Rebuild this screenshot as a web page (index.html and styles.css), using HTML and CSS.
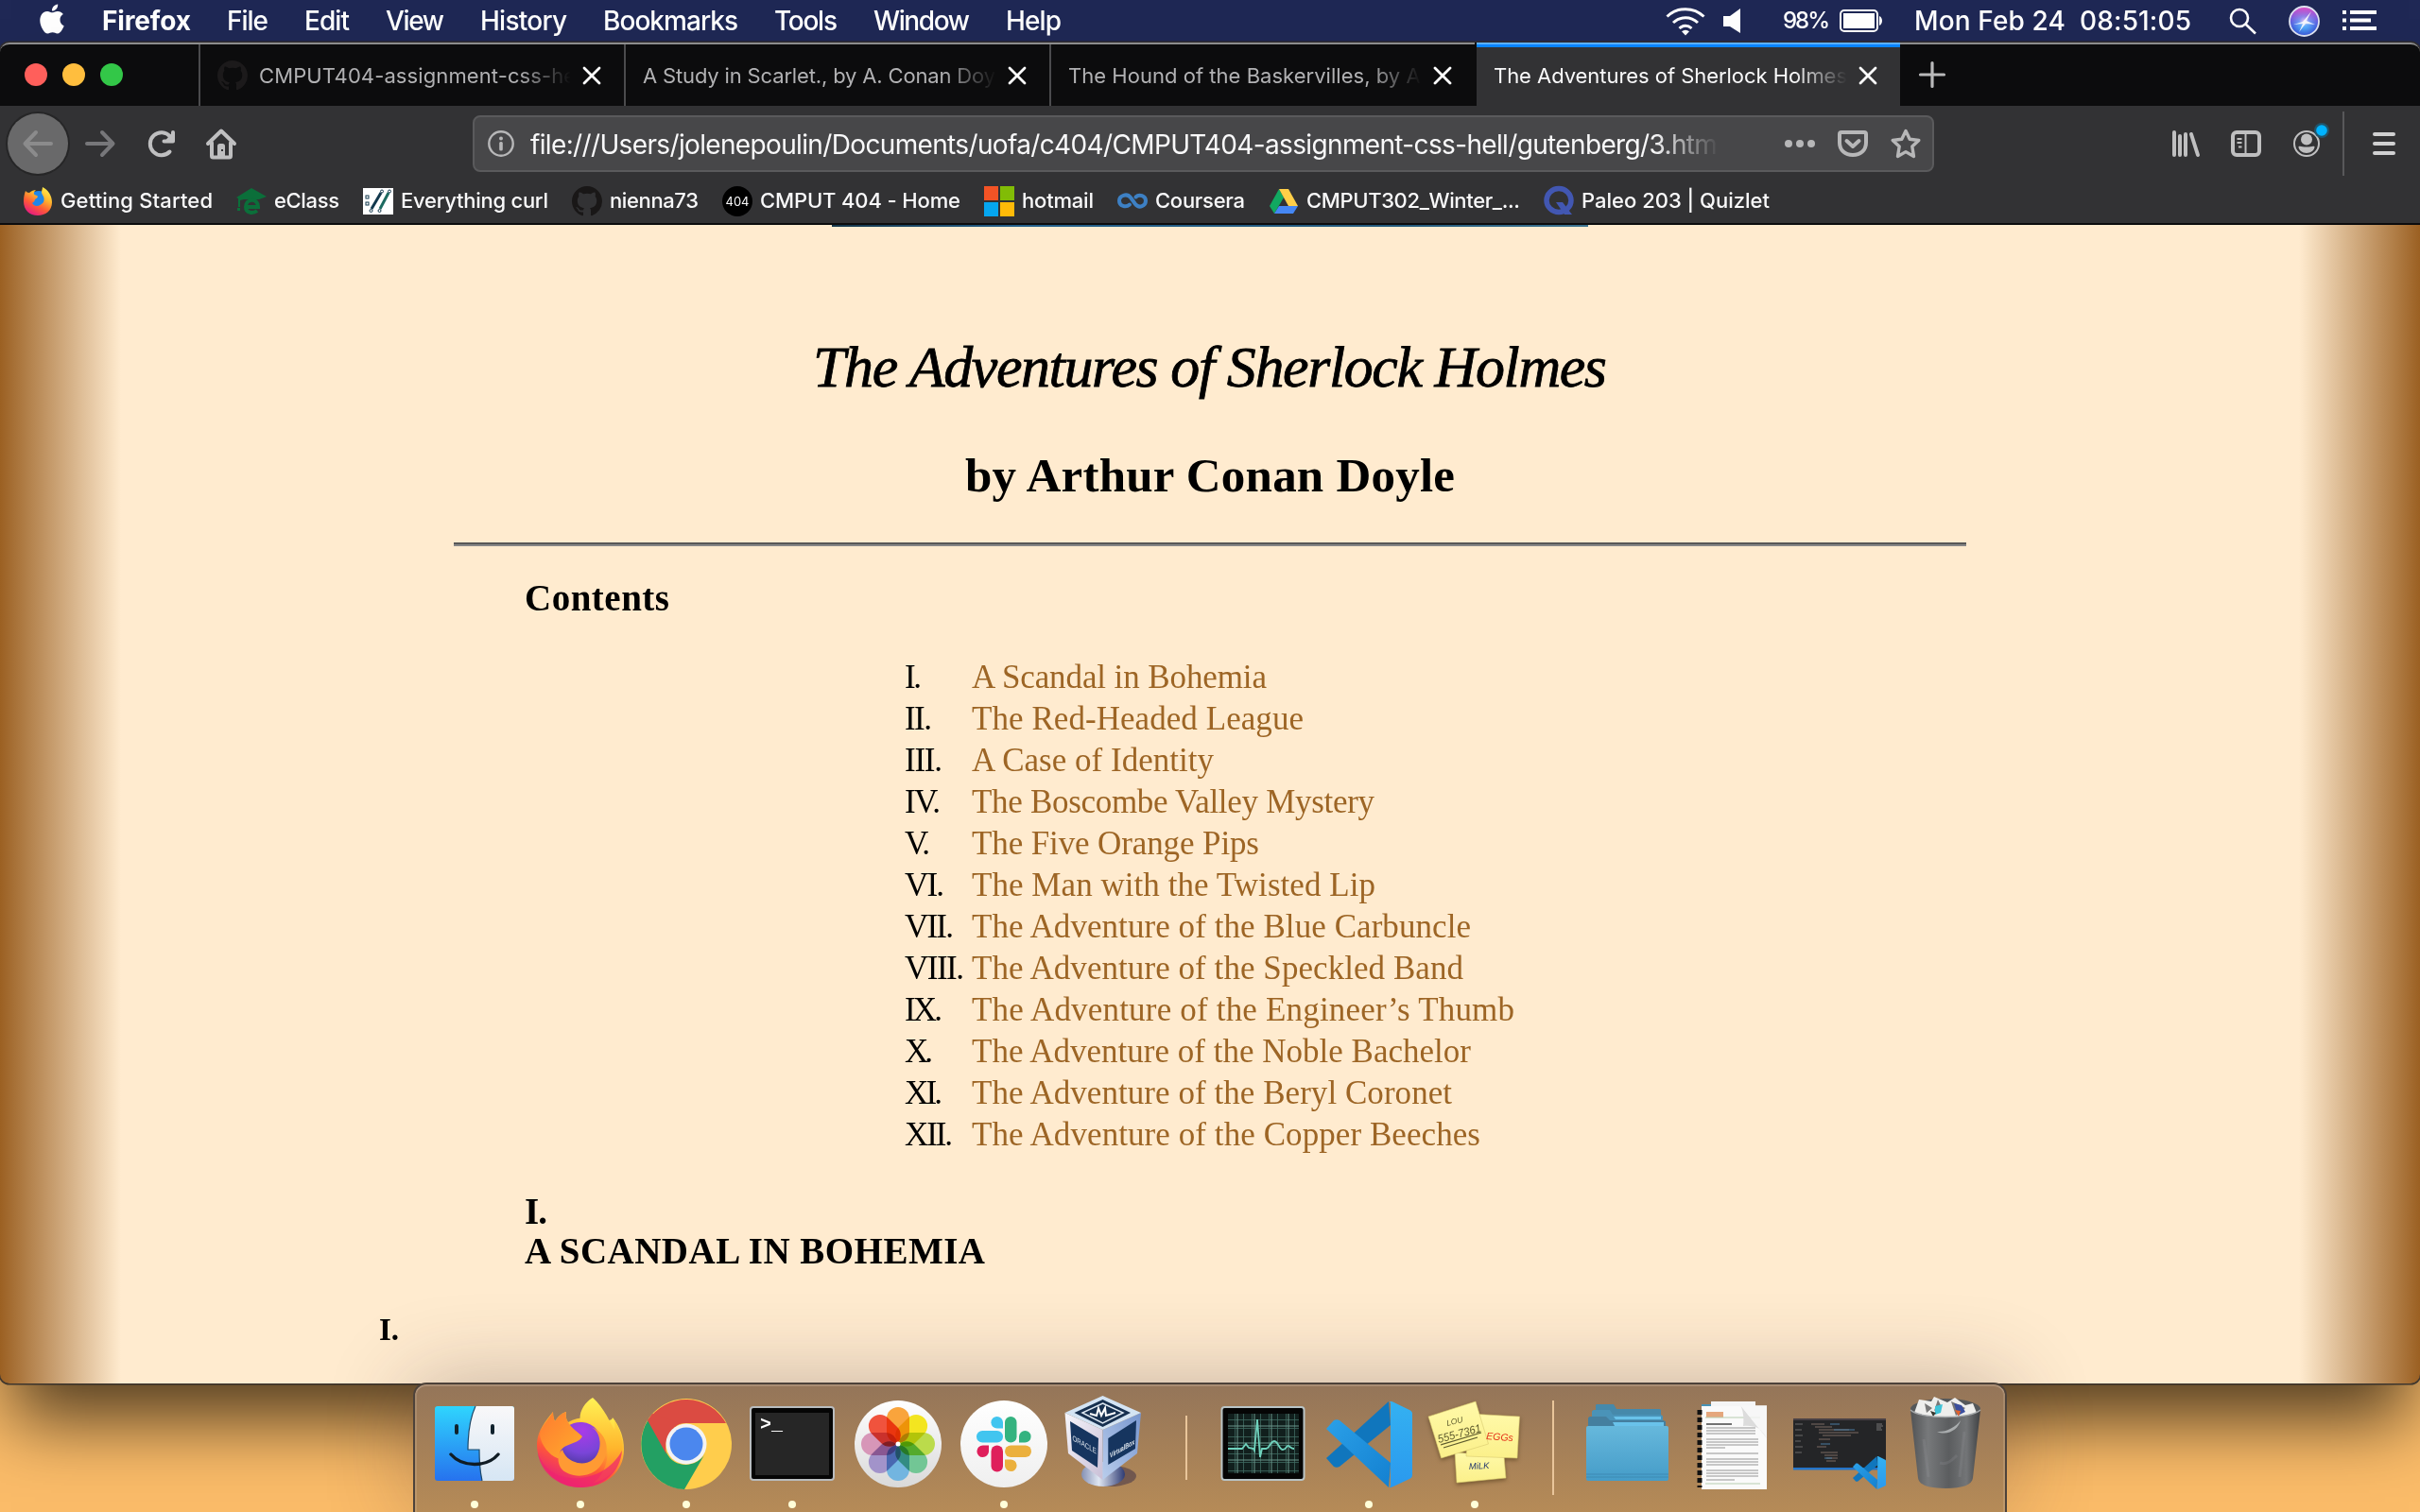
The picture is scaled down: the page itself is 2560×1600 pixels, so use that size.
FILE: index.html
```html
<!DOCTYPE html>
<html lang="en">
<head>
<meta charset="utf-8">
<title>The Adventures of Sherlock Holmes</title>
<link rel="stylesheet" href="styles.css">
</head>
<body>
<svg class="defs" width="0" height="0">
  <defs>
    <linearGradient id="gBlue" x1="0" y1="0" x2="0" y2="1"><stop offset="0" stop-color="#2fd5fe"/><stop offset="1" stop-color="#2672ee"/></linearGradient>
    <linearGradient id="gWhite" x1="0" y1="0" x2="0" y2="1"><stop offset="0" stop-color="#f9f8f9"/><stop offset="1" stop-color="#d6e6f4"/></linearGradient>
    <linearGradient id="gFox" x1="0.8" y1="0" x2="0.25" y2="1"><stop offset="0" stop-color="#fff04f"/><stop offset=".35" stop-color="#ffb52e"/><stop offset=".65" stop-color="#ff5a36"/><stop offset="1" stop-color="#e31587"/></linearGradient>
    <linearGradient id="gFlame" x1="0" y1="0" x2="0" y2="1"><stop offset="0" stop-color="#fff255"/><stop offset=".6" stop-color="#ffb52c"/><stop offset="1" stop-color="#ff6a2f"/></linearGradient>
    <linearGradient id="gHead" x1="0" y1="0" x2="1" y2="1"><stop offset="0" stop-color="#ff7a30"/><stop offset="1" stop-color="#ffad2c"/></linearGradient>
    <radialGradient id="gGlobe" cx=".55" cy=".2" r=".9"><stop offset="0" stop-color="#a93be8"/><stop offset=".6" stop-color="#7a45d8"/><stop offset="1" stop-color="#48379a"/></radialGradient>
    <linearGradient id="gPlate" x1="0" y1="0" x2="0" y2="1"><stop offset="0" stop-color="#fff"/><stop offset="1" stop-color="#d9d9d9"/></linearGradient>
    <linearGradient id="gSlack" x1="0" y1="0" x2="0" y2="1"><stop offset="0" stop-color="#fff"/><stop offset="1" stop-color="#efefef"/></linearGradient>
    <linearGradient id="gCol" x1="0" y1="0" x2="0" y2="1"><stop offset="0" stop-color="#34b1f1"/><stop offset="1" stop-color="#2a99ee"/></linearGradient>
    <linearGradient id="gBand" x1="0" y1="0" x2="1" y2="1"><stop offset="0" stop-color="#2ba0e8"/><stop offset="1" stop-color="#1380d0"/></linearGradient>
    <linearGradient id="gNote" x1="0" y1="0" x2="0" y2="1"><stop offset="0" stop-color="#fff9a8"/><stop offset="1" stop-color="#fbf08a"/></linearGradient>
    <linearGradient id="gFolder" x1="0" y1="0" x2="0" y2="1"><stop offset="0" stop-color="#66b8dc"/><stop offset="1" stop-color="#459cc8"/></linearGradient>
    <linearGradient id="gTrash" x1="0" y1="0" x2="1" y2="0"><stop offset="0" stop-color="#505254"/><stop offset=".25" stop-color="#77797b"/><stop offset=".55" stop-color="#5b5d5f"/><stop offset=".8" stop-color="#737577"/><stop offset="1" stop-color="#3e4042"/></linearGradient>
    <linearGradient id="gBoxL" x1="0" y1="0" x2="1" y2="1"><stop offset="0" stop-color="#f6f6fb"/><stop offset="1" stop-color="#c9bfd6"/></linearGradient>
    <linearGradient id="gBoxR" x1="1" y1="0" x2="0" y2="1"><stop offset="0" stop-color="#7796cf"/><stop offset="1" stop-color="#b9cdec"/></linearGradient>
    <linearGradient id="gBase" x1="0" y1="0" x2="1" y2="0"><stop offset="0" stop-color="#8591b4"/><stop offset=".4" stop-color="#dfe6f2"/><stop offset="1" stop-color="#2e3b73"/></linearGradient>
    <radialGradient id="gSiri" cx=".5" cy=".5" r=".5"><stop offset="0" stop-color="#fff"/><stop offset=".35" stop-color="#55b8ff"/><stop offset="1" stop-color="#3a53d8"/></radialGradient>
    <linearGradient id="gSiriTop" x1="0" y1="0" x2="0" y2="1"><stop offset="0" stop-color="#e64fc4"/><stop offset=".75" stop-color="#9a5cf0" stop-opacity="0"/></linearGradient>
    <pattern id="pGrid" x="17" y="30" width="9" height="9" patternUnits="userSpaceOnUse"><path d="M0 .5H9M.5 0V9" stroke="#3f6a60" stroke-width=".8"/></pattern>
    <symbol id="octocat" viewBox="0 0 16 16"><path d="M8 0C3.58 0 0 3.58 0 8c0 3.54 2.29 6.53 5.47 7.59.4.07.55-.17.55-.38 0-.19-.01-.82-.01-1.49-2.01.37-2.53-.49-2.69-.94-.09-.23-.48-.94-.82-1.13-.28-.15-.68-.52-.01-.53.63-.01 1.08.58 1.23.82.72 1.21 1.87.87 2.33.66.07-.52.28-.87.51-1.07-1.78-.2-3.64-.89-3.64-3.95 0-.87.31-1.59.82-2.15-.08-.2-.36-1.02.08-2.12 0 0 .67-.21 2.2.82.64-.18 1.32-.27 2-.27s1.36.09 2 .27c1.53-1.04 2.2-.82 2.2-.82.44 1.1.16 1.92.08 2.12.51.56.82 1.27.82 2.15 0 3.07-1.87 3.75-3.65 3.95.29.25.54.73.54 1.48 0 1.07-.01 1.93-.01 2.2 0 .21.15.46.55.38A8.01 8.01 0 0 0 16 8c0-4.42-3.58-8-8-8z"/></symbol>
    <symbol id="vscode" viewBox="0 0 91 91">
      <path d="M66 0L0 60l8 9c2 1 4 1 6 0L68 25z" fill="#1076bd"/>
      <path d="M0 29l8-9c2-1 4-1 6 0L68 65l-2 26z" fill="url(#gBand)"/>
      <path d="M66 0c2-.4 3-.2 5 .8L88 9c2 1 3 2 3 4v65c0 2-1 3-3 4l-17 8c-2 1-3 1-5 1 1.500 0 2-1 2-3V3c0-2-.5-3-2-3z" fill="url(#gCol)"/>
    </symbol>
  </defs>
</svg>

<header class="menubar">
  <svg class="apple" viewBox="2 0 20 24" fill="#fff"><path d="M12.152 6.896c-.948 0-2.415-1.078-3.96-1.04-2.04.027-3.91 1.183-4.961 3.014-2.117 3.675-.546 9.103 1.519 12.09 1.013 1.454 2.208 3.09 3.792 3.039 1.52-.065 2.09-.987 3.935-.987 1.831 0 2.35.987 3.96.948 1.637-.026 2.676-1.48 3.676-2.948 1.156-1.688 1.636-3.325 1.662-3.415-.039-.013-3.182-1.221-3.22-4.857-.026-3.04 2.48-4.494 2.597-4.559-1.429-2.09-3.623-2.324-4.39-2.376-2-.156-3.675 1.09-4.61 1.09zM15.53 3.83c.843-1.012 1.4-2.427 1.245-3.83-1.207.052-2.662.805-3.532 1.818-.78.896-1.454 2.338-1.273 3.714 1.338.104 2.715-.688 3.559-1.701"/></svg>
  <nav class="menus">
    <span class="app-name" data-w="94">Firefox</span><span data-w="44">File</span><span data-w="48">Edit</span><span data-w="62">View</span><span data-w="92">History</span><span data-w="143">Bookmarks</span><span data-w="67">Tools</span><span data-w="102">Window</span><span data-w="59">Help</span>
  </nav>
  <div class="status">
    <svg class="wifi" width="42" height="32" viewBox="0 0 42 32" fill="none" stroke="#fff" stroke-width="3"><path d="M1.500 11.500C12.500 1 29.500 1 40.500 11.500M8 18c7.500-7 18.500-7 26 0M14.500 24c4-3.600 9-3.600 13 0"/><path d="M21 31.500l-4-4.200c2.500-2 5.500-2 8 0z" fill="#fff" stroke="none"/></svg>
    <svg class="speaker" width="18" height="26" viewBox="0 0 18 26" fill="#fff"><path d="M0 8h7l11-8v26L7 19H0z"/></svg>
    <span class="percent" data-w="50">98%</span>
    <svg class="battery" width="46" height="24" viewBox="0 0 46 24"><rect x="1" y="1" width="39" height="22" rx="4" fill="none" stroke="#fff" stroke-width="2"/><rect x="4" y="4" width="33" height="16" fill="#fff"/><path d="M42 7c4 1.500 4 8.500 0 10z" fill="#fff"/></svg>
    <span class="clock" data-w="293">Mon Feb 24&nbsp; 08:51:05</span>
    <svg class="search" width="29" height="28" viewBox="0 0 29 28" fill="none" stroke="#fff" stroke-width="2.600"><circle cx="11" cy="11" r="9"/><path d="M17.500 17.500L28 27.500"/></svg>
    <svg class="siri" width="33" height="33" viewBox="0 0 33 33"><circle cx="16.500" cy="16.500" r="15.500" fill="url(#gSiri)"/><circle cx="16.500" cy="16.500" r="15.500" fill="url(#gSiriTop)"/><path d="M5 20l10-3 9-11-5 10 9 4-10-1-7 9 4-9z" fill="#fff" fill-opacity=".85"/><circle cx="16.500" cy="16.500" r="15.500" fill="none" stroke="#dfe3f2" stroke-width="1.800"/></svg>
    <svg class="list" width="36" height="22" viewBox="0 0 36 22" fill="#fff"><path d="M0 0h4v4H0zM8 0h28v4H8zM0 8.500h4v4H0zM8 8.500h22v4H8zM0 17h4v4H0zM8 17h28v4H8z"/></svg>
  </div>
</header>

<main class="window">
  <div class="tabbar">
    <div class="lights"><i class="red"></i><i class="yellow"></i><i class="green"></i></div>
    <div class="tab"><svg class="favicon" width="32" height="32" fill="#1c1a1b"><use href="#octocat"/></svg><div class="label"><span data-w="346">CMPUT404-assignment-css-hell</span></div><svg class="close" viewBox="0 0 20 20"><path d="M2 2l16 16M18 2L2 18"/></svg></div>
    <div class="tab"><div class="label"><span data-w="391">A Study in Scarlet., by A. Conan Doyle</span></div><svg class="close" viewBox="0 0 20 20"><path d="M2 2l16 16M18 2L2 18"/></svg></div>
    <div class="tab"><div class="label"><span data-w="379">The Hound of the Baskervilles, by A.</span></div><svg class="close" viewBox="0 0 20 20"><path d="M2 2l16 16M18 2L2 18"/></svg></div>
    <div class="tab active"><div class="label"><span data-w="374">The Adventures of Sherlock Holmes</span></div><svg class="close" viewBox="0 0 20 20"><path d="M2 2l16 16M18 2L2 18"/></svg></div>
    <svg class="newtab" width="28" height="28" viewBox="0 0 28 28"><path d="M14 1.500v25M1.500 14h25" stroke="#b9b9ba" stroke-width="3.200" stroke-linecap="round"/></svg>
  </div>

  <div class="toolbar">
    <div class="back"><svg width="32" height="32" viewBox="0 0 32 32" fill="none" stroke="#8b8b8c" stroke-width="4" stroke-linecap="round" stroke-linejoin="round"><path d="M30 16H3M14 4L2.500 16 14 28"/></svg></div>
    <svg class="forward" width="32" height="32" viewBox="0 0 32 32" fill="none" stroke="#77777a" stroke-width="4" stroke-linecap="round" stroke-linejoin="round"><path d="M2 16h27M18 4l11.500 12L18 28"/></svg>
    <svg class="reload" width="32" height="32" viewBox="0 0 32 32" fill="none" stroke="#bfbfc0" stroke-width="4" stroke-linecap="round" stroke-linejoin="round"><path d="M24.500 24.500A12 12 0 1 1 25 8.500"/><path d="M28 4v9.500H18.500" /><path d="M27 6v7h-6z" fill="#bfbfc0" stroke-width="2"/></svg>
    <svg class="home" width="32" height="32" viewBox="0 0 32 32"><path d="M2 16L16 2.500 30 16M6 15v14c0 1 .5 1.500 1.500 1.500h17c1 0 1.500-.5 1.500-1.500V15" fill="none" stroke="#bfbfc0" stroke-width="4" stroke-linecap="round" stroke-linejoin="round"/><path d="M12 31V18.500c0-1.500 1-2.500 2.500-2.500h3c1.500 0 2.500 1 2.500 2.500V31z" fill="#bfbfc0"/><rect x="16" y="22" width="2" height="2" fill="#323234"/></svg>
    <div class="urlbar">
      <svg width="28" height="28" viewBox="0 0 28 28"><circle cx="14" cy="14" r="12.700" fill="none" stroke="#b7b7b8" stroke-width="2.400"/><circle cx="14" cy="8.500" r="2" fill="#b7b7b8"/><rect x="12.200" y="12" width="3.600" height="9.500" rx="1.500" fill="#b7b7b8"/></svg>
      <div class="url"><span data-w="1262">file:///Users/jolenepoulin/Documents/uofa/c404/CMPUT404-assignment-css-hell/gutenberg/3.html</span></div>
      <div class="actions">
        <svg width="32" height="32" viewBox="0 0 32 32" fill="#b7b7b8"><circle cx="4" cy="16" r="4"/><circle cx="16" cy="16" r="4"/><circle cx="28" cy="16" r="4"/></svg>
        <svg width="32" height="32" viewBox="0 0 32 32" fill="none" stroke="#b7b7b8" stroke-width="4" stroke-linecap="round" stroke-linejoin="round"><path d="M4 4h24c1 0 2 .7 2 2v9c0 8-6 13-14 13S2 23 2 15V6c0-1.300 1-2 2-2z"/><path d="M9.500 13l6.500 6 6.500-6"/></svg>
        <svg width="32" height="32" viewBox="0 0 32 32" fill="none" stroke="#b7b7b8" stroke-width="3.400" stroke-linejoin="round"><path d="M16 2.500l4.200 8.700 9.600 1.300-7 6.600 1.700 10.400-8.500-4.900-8.500 4.900 1.700-10.400-7-6.600 9.600-1.300z"/></svg>
      </div>
    </div>
    <svg class="library" width="32" height="32" viewBox="0 0 32 32" stroke="#bfbfc0" stroke-width="4" stroke-linecap="round"><path d="M4 4v24M10 8v20M16 6v22M22 6l7 22"/></svg>
    <svg class="sidebar" width="32" height="32" viewBox="0 0 32 32"><rect x="2" y="4" width="28" height="24" rx="4" fill="none" stroke="#bfbfc0" stroke-width="4"/><path d="M15.500 4v24" stroke="#bfbfc0" stroke-width="2"/><path d="M6.500 11h5M6.500 15h5M8 19.500h3.500" stroke="#bfbfc0" stroke-width="2"/></svg>
    <svg class="account" width="36" height="40" viewBox="0 0 36 40"><circle cx="16" cy="20" r="13" fill="none" stroke="#bfbfc0" stroke-width="2"/><circle cx="16" cy="15.500" r="6" fill="#bfbfc0"/><path d="M7.500 23c2-1 4 .5 8.500.5s6.500-1.500 8.500-.5c0 4-4 7-8.500 7s-8.500-3-8.500-7z" fill="#bfbfc0"/><circle cx="32" cy="6" r="8" fill="#21546b"/><circle cx="32" cy="6" r="5.800" fill="#00b3ff"/></svg>
    <div class="divider"></div>
    <svg class="burger" width="24" height="24" viewBox="0 0 24 24" stroke="#d0d0d1" stroke-width="4" stroke-linecap="round"><path d="M2 2h20M2 12h20M2 22h20"/></svg>
  </div>

  <div class="bookmarks">
    <a><svg viewBox="0 0 32 32"><circle cx="17" cy="17" r="12" fill="#1f86e8"/><path d="M3 5c1 1 2 2 4 2 2-2 5-3 7-3-3 3-3 5 1 6 2 1 0 3-2 4 0 2-2 3-3 4 3 5 9 3 12-1 2-5-1-7-2-10 0-3 1-4 1-6 6 3 10 9 10 16 0 9-7 14-15 14C7 31 1 25 1 16 1 11 2 8 3 5z" fill="url(#gFox)"/></svg><span data-w="161">Getting Started</span></a>
    <a><svg viewBox="0 0 32 32"><path d="M16 2l16 9-8 3H8l-4 1v7H2v-9l-2-1z" fill="#0b6f3a"/><path d="M1 23h3v3H1z" fill="#0b6f3a"/><path d="M10 22h13c0-10-13-9-13 0 0 7 8 7 12 4" fill="none" stroke="#0b6f3a" stroke-width="4"/></svg><span data-w="69">eClass</span></a>
    <a><svg viewBox="0 0 32 32"><path d="M0 2h32v28H0z" fill="#fff"/><path d="M9 24L19 7" stroke="#12384d" stroke-width="3"/><path d="M18 24L27 7" stroke="#1c6a60" stroke-width="3"/><g fill="none" stroke="#12384d" stroke-width="1"><rect x="3" y="10" width="3" height="3"/><rect x="3" y="17" width="3" height="3"/><circle cx="20" cy="5.500" r="1.500"/><circle cx="28" cy="5.500" r="1.500"/><circle cx="8.500" cy="26" r="1.500"/><circle cx="17.500" cy="26" r="1.500"/></g></svg><span data-w="156">Everything curl</span></a>
    <a><svg viewBox="0 0 32 32" fill="#191717"><use href="#octocat"/></svg><span data-w="94">nienna73</span></a>
    <a><b class="badge404">404</b><span data-w="212">CMPUT 404 - Home</span></a>
    <a><svg viewBox="0 0 32 32"><path d="M0 0h15v15H0z" fill="#f35325"/><path d="M17 0h15v15H17z" fill="#81bc06"/><path d="M0 17h15v15H0z" fill="#05a6f0"/><path d="M17 17h15v15H17z" fill="#ffba08"/></svg><span data-w="76">hotmail</span></a>
    <a><svg viewBox="0 0 32 32"><path d="M13 19.500C9 23 2 21 2 15.500S10 7 14 12l5 7c4 5 11 2 11-3.500S23 8 19.500 11.500" fill="none" stroke="#3d80c4" stroke-width="4" stroke-linecap="round"/></svg><span data-w="95">Coursera</span></a>
    <a><svg viewBox="0 0 32 32"><path d="M11 3L1 21l5 8L16 12z" fill="#11a861"/><path d="M11 3h10l10 18H21z" fill="#ffcf48"/><path d="M11 21h20l-5 8H6z" fill="#4587f4"/></svg><span data-w="226">CMPUT302_Winter_...</span></a>
    <a><svg viewBox="0 0 32 32"><ellipse cx="16" cy="15" rx="13" ry="12.500" fill="none" stroke="#4257b2" stroke-width="5.500"/><path d="M13 17h7l10 13h-8z" fill="#4257b2"/></svg><span data-w="199">Paleo 203 | Quizlet</span></a>
  </div>

  <article class="page">
    <div class="cover"></div>
    <h1><span data-w="840">The Adventures of Sherlock Holmes</span></h1>
    <h2><span data-w="518">by Arthur Conan Doyle</span></h2>
    <hr>
    <h3 class="contents"><span data-w="153">Contents</span></h3>
    <ul class="toc">
      <li><b data-w="18">I.</b><a data-w="312">A Scandal in Bohemia</a></li>
      <li><b data-w="29">II.</b><a data-w="351">The Red-Headed League</a></li>
      <li><b data-w="40">III.</b><a data-w="256">A Case of Identity</a></li>
      <li><b data-w="38">IV.</b><a data-w="426">The Boscombe Valley Mystery</a></li>
      <li><b data-w="27">V.</b><a data-w="304">The Five Orange Pips</a></li>
      <li><b data-w="42">VI.</b><a data-w="427">The Man with the Twisted Lip</a></li>
      <li><b data-w="52">VII.</b><a data-w="528">The Adventure of the Blue Carbuncle</a></li>
      <li><b data-w="63">VIII.</b><a data-w="520">The Adventure of the Speckled Band</a></li>
      <li><b data-w="40">IX.</b><a data-w="574">The Adventure of the Engineer’s Thumb</a></li>
      <li><b data-w="30">X.</b><a data-w="528">The Adventure of the Noble Bachelor</a></li>
      <li><b data-w="40">XI.</b><a data-w="508">The Adventure of the Beryl Coronet</a></li>
      <li><b data-w="51">XII.</b><a data-w="538">The Adventure of the Copper Beeches</a></li>
    </ul>
    <h3 class="chapter"><span data-w="24">I.</span><br><span data-w="487">A SCANDAL IN BOHEMIA</span></h3>
    <h4><span data-w="21">I.</span></h4>
  </article>
</main>

<footer class="dock">
  <svg class="app" viewBox="0 0 112 137">
    <rect x="14" y="25" width="84" height="79" rx="3" fill="url(#gBlue)"/>
    <path d="M57 25h38c2 0 3 1 3 3v73c0 2-1 3-3 3H64c-2-9-3-20-3-33H49c0-18 2-33 8-46z" fill="url(#gWhite)"/>
    <path d="M57 25c-6 13-8 28-8 46h12c0 12 1 24 3 33" fill="none" stroke="#1c4a6b" stroke-width="1.200"/>
    <path d="M37 46v7M75 46v7" stroke="#10222d" stroke-width="4" stroke-linecap="round"/><path d="M31 76c12 14 38 14 50 0" fill="none" stroke="#101c24" stroke-width="3.400" stroke-linecap="round"/>
    <circle class="run" cx="56" cy="129" r="4"/>
  </svg>
  <svg class="app" viewBox="0 0 112 137">
    <path d="M27 31c0 5 1 8 2 10 4-6 8-9 12-10-1 4 0 8 2 11 20-12 46 4 47-5 10 13 12 24 12 34 0 25-21 40-46 40S10 90 10 66c0-14 8-24 17-35z" fill="url(#gFox)"/>
    <path d="M69 16c13 12 18 26 23 34 1-5 0-8-1-12 8 13 11 25 9 36-3 17-16 29-30 32 12-9 20-30 10-50-5-9-12-14-24-15-2-8 3-19 13-25z" fill="url(#gFlame)"/>
    <path d="M33 63a23 23 0 1 1 46 4c0 12-10 19-22 19s-24-10-24-23z" fill="url(#gGlobe)"/>
    <path d="M27 31c0 5 1 8 2 10 4-6 8-9 12-10-1 4 0 8 2 11 3 6 11 11 15 15-2 5-10 7-17 10-6 3-9 8-6 14C24 79 14 66 13 55c3-10 9-16 14-24z" fill="url(#gHead)"/>
    <path d="M67 47c8 3 11 14 9 23-3 12-12 17-23 15-8-2-14-7-16-14-5 4-6 12-2 19 6 9 24 12 36 4 15-10 20-38-4-47z" fill="#ff9a33"/>
    <path d="M11 74c6 20 24 29 45 27 20-2 36-14 44-29-2 24-21 39-44 39S13 95 11 74z" fill="#f0246e" opacity=".7"/>
    <circle class="run" cx="56" cy="129" r="4"/>
  </svg>
  <svg class="app" viewBox="0 0 112 137">
    <circle cx="56" cy="65" r="48" fill="#ffcd4c"/>
    <path d="M15 41a48 48 0 0 1 83 2H56c-10 0-19 6-21 15z" fill="#db4b42"/>
    <path d="M16 39a48 48 0 0 0 38 74l22-38c-8 15-33 17-41-1z" fill="#23a063"/>
    <path d="M15 40l20 36c-2-8-1-24 15-33l-30-10z" fill="#db4b42"/>
    <circle cx="56" cy="65" r="21.500" fill="#f3f3f3"/><circle cx="56" cy="65" r="17.500" fill="#4b87ee"/>
    <circle class="run" cx="56" cy="129" r="4"/>
  </svg>
  <svg class="app" viewBox="0 0 112 137">
    <rect x="12" y="26" width="88" height="77" rx="3" fill="#050505" stroke="#b9bcbe" stroke-width="2"/><rect x="17" y="32" width="78" height="66" fill="#262626"/>
    <text x="22" y="50" class="prompt">&gt;_</text>
    <circle class="run" cx="56" cy="129" r="4"/>
  </svg>
  <svg class="app photos" viewBox="0 0 112 137">
    <circle cx="56" cy="65" r="46" fill="url(#gPlate)"/>
    <g class="petals">
      <rect x="44" y="26" width="24" height="38" rx="12" fill="#f9a43c"/>
      <rect x="44" y="26" width="24" height="38" rx="12" fill="#f3e520" transform="rotate(45 56 65)"/>
      <rect x="44" y="26" width="24" height="38" rx="12" fill="#bbdb4b" transform="rotate(90 56 65)"/>
      <rect x="44" y="26" width="24" height="38" rx="12" fill="#72c695" transform="rotate(135 56 65)"/>
      <rect x="44" y="26" width="24" height="38" rx="12" fill="#72b5e0" transform="rotate(180 56 65)"/>
      <rect x="44" y="26" width="24" height="38" rx="12" fill="#a293ca" transform="rotate(225 56 65)"/>
      <rect x="44" y="26" width="24" height="38" rx="12" fill="#d796b8" transform="rotate(270 56 65)"/>
      <rect x="44" y="26" width="24" height="38" rx="12" fill="#f0533d" transform="rotate(315 56 65)"/>
    </g>
    <circle cx="56" cy="65" r="2.500" fill="#fff"/>
  </svg>
  <svg class="app" viewBox="0 0 112 137">
    <circle cx="56" cy="65" r="46" fill="url(#gSlack)"/>
    <g fill="#41c5ef"><rect x="27" y="51" width="28" height="12.500" rx="6.250"/><path d="M55 48.500V42a6.300 6.300 0 1 0-6.300 6.500z"/></g>
    <g fill="#34b380"><rect x="57" y="36" width="12.500" height="27.500" rx="6.250"/><path d="M72 63.500V57a6.300 6.300 0 1 1 6.300 6.500z"/></g>
    <g fill="#ebb03d"><rect x="57" y="66.500" width="28" height="12.500" rx="6.250"/><path d="M57 81.500V88a6.300 6.300 0 1 0 6.300-6.500z"/></g>
    <g fill="#df1f5b"><rect x="42.500" y="66.500" width="12.500" height="28" rx="6.250"/><path d="M40 66.500V73a6.300 6.300 0 1 1-6.300-6.500z"/></g>
    <circle class="run" cx="56" cy="129" r="4"/>
  </svg>
  <svg class="app" viewBox="0 0 112 137">
    <ellipse cx="56" cy="99" rx="28" ry="11" fill="#2a2144" opacity=".45"/>
    <ellipse cx="49" cy="97" rx="23" ry="13" fill="url(#gBase)"/>
    <path d="M8.500 32l40 18v53L12 75z" fill="url(#gBoxL)"/><path d="M89 32L48.500 50v53L85 75z" fill="url(#gBoxR)"/><path d="M48.500 14L89 32 48.500 50l-40-18z" fill="#d4e4f3"/>
    <path d="M48.500 18L78 32 48.500 47l-30-15z" fill="#17304f"/><path d="M14 41l30 18-1 31-27-18zM54.300 59L84 40l-1 30-28.700 17z" fill="#16355f"/>
    <path d="M48.500 22L70 32l-21.500 11L27 32z" fill="none" stroke="#dfe9f2" stroke-width="1.500"/><path d="M35 33l7 2 2-8 3 8 4-8 1 8 10-3" fill="none" stroke="#fff" stroke-width="2"/>
    <text class="vb" transform="matrix(.87 .5 0 1 16.500 61)" textLength="29" lengthAdjust="spacingAndGlyphs">ORACLE</text><text class="vb bold" transform="matrix(.87 -.5 0 1 56 80)" textLength="30" lengthAdjust="spacingAndGlyphs">VirtualBox</text>
  </svg>
  <div class="sep"><i></i></div>
  <svg class="app" viewBox="0 0 112 137">
    <rect x="12.500" y="26" width="87" height="77" rx="3" fill="#050505" stroke="#b9c4c6" stroke-width="2"/><rect x="19" y="33" width="75" height="63" fill="#111f1d"/><rect x="19" y="33" width="75" height="63" fill="url(#pGrid)"/>
    <path d="M29 33v63M47 33v63M65 33v63M83 33v63M19 46h75M19 64h75M19 82h75" stroke="#6a968b" stroke-width="1"/>
    <path d="M19 70h15l4-5 3 4 5 1 1 2 3-33 3 40 2-9h4c4 0 5-8 9-8s5 9 9 9 4-5 6-4 3 3 6 3" fill="none" stroke="#6fd2bd" stroke-width="1.800"/>
  </svg>
  <svg class="app" viewBox="0 0 112 137"><use href="#vscode" x="11" y="20" width="91" height="91"/><circle class="run" cx="56" cy="129" r="4"/></svg>
  <svg class="app" viewBox="0 0 112 137">
    <g class="notes"><path d="M35 74l52 4 2 23-52 5z"/><path d="M50 33l53.500 3L101 80l-54-2z"/><path d="M7 36l50-16 13.500 45L20.600 80z"/></g>
    <text class="hand" x="27" y="46" transform="rotate(-14 27 46)">LOU</text><text class="hand big" x="18" y="64" transform="rotate(-15 18 64)" textLength="47" lengthAdjust="spacingAndGlyphs">555-7361</text><path d="M20 66l43-13M23 69l36-11" stroke="#5d5a2d" stroke-width="1.200"/>
    <text class="hand red" x="68" y="60" transform="rotate(4 67 60)">EGGs</text><text class="hand navy" x="50" y="92" transform="rotate(-3 50 92)">MiLK</text>
    <circle class="run" cx="56" cy="129" r="4"/>
  </svg>
  <div class="sep tall"><i></i></div>
  <svg class="app" viewBox="0 0 112 137">
    <path d="M22 24c0-1 1-1 2-1h17l3 5h45c2 0 2 1 2 2v18H22z" fill="#4689ab"/><path d="M18 31c0-1 1-2 2-2h17l3 5h50c2 0 3 1 3 2v16H18z" fill="#4a93b8"/><path d="M41 36h50v3H43z" fill="#69c2ea"/><path d="M14 38c0-1 1-2 2-2h17l4 4h56c2 0 3 1 3 2v12H14z" fill="#457f9f"/><path d="M40 42h54v4H42z" fill="#69c2ea"/>
    <rect x="12" y="46" width="87" height="58" rx="2" fill="url(#gFolder)"/><path d="M12 97h87M12 100h87" stroke="#3a86ae" stroke-width=".8"/>
  </svg>
  <svg class="app" viewBox="0 0 112 137">
    <path d="M22 23h20v8H22z" fill="#4792b5"/><path d="M32 20h47v8H32z" fill="#f5f5f5"/><path d="M22 25h69v88H22z" fill="#fafafa"/>
    <path d="M20 29v82" stroke="#111" stroke-width="5" stroke-dasharray="5 3"/>
    <rect x="27" y="31" width="18" height="6" fill="#e5a77d"/><path d="M26 37h58M26 107h58" stroke="#b7cdb0"/>
    <path d="M27 44h27" stroke="#444" stroke-width="1.500"/><path d="M27 48h52M27 51h52M27 54h52M27 60h55M27 63h55M27 66h55M27 69h20M27 75h55M27 81h55M27 84h55M27 87h55M27 93h55M27 96h55M27 99h55M27 103h30" stroke="#b6b6b6" stroke-width="1.300"/>
    <path d="M63 24l28 35c-4-11-14-14-25-13 1-8 0-17-3-22z" fill="#dcdcdc"/><path d="M63 24h28v35z" fill="#f6f6f6" opacity=".8"/>
  </svg>
  <svg class="app" viewBox="0 0 112 137">
    <path d="M7 38h98v54H7z" fill="#242527"/><path d="M7 38h98v2H7z" fill="#484044"/><path d="M7 90h98v2.500H7z" fill="#2474c8"/>
    <path d="M9 44h8M9 50h7M9 56h8M9 62h6M9 68h8M9 74h7" stroke="#6b6b6b"/><path d="M26 44h14M30 47h18M34 50h32M34 53h42M38 56h30M34 60h12M32 68h10M36 74h18M40 77h14M42 80h12M42 83h10" stroke="#7b6b62" stroke-width="1.200"/><path d="M46 44h10M50 50h22M36 65h10M40 80h8" stroke="#4a7ca2" stroke-width="1"/><path d="M95 44h6M95 46h7M95 48h5M95 50h6" stroke="#777"/>
    <use href="#vscode" x="70" y="78" width="35" height="35"/>
  </svg>
  <svg class="app" viewBox="0 0 112 137">
    <ellipse cx="56" cy="28" rx="37" ry="11" fill="#55585a"/>
    <path d="M23 32l5-14 13 2 3-5 14 6 8-5 11 8 8-2 4 10-17 6H35z" fill="#eeeeec"/><path d="M34 22l8 5-6 5zM62 20l7 3 8 4-10 8zM48 18l4 8-8 4z" fill="#777"/><path d="M45 25l8-2-2 9-6 2z" fill="#3fc3d8"/><path d="M65 22l8 2 4 7-8 4z" fill="#3b4f9e"/><path d="M66 29l6 1-2 6z" fill="#e0622c"/><path d="M40 30l6 2-3 4z" fill="#38372e"/>
    <path d="M19 29c10 10 64 10 74 0l-8 72c-1 7-10 11-29 11s-28-4-29-11z" fill="url(#gTrash)"/><path d="M19 29c10 10 64 10 74 0" fill="none" stroke="#a4a7a9" stroke-width="1.500"/>
    <path d="M47 52c9 1 20-5 25-12-2 9-13 17-25 12z" fill="#c2c5c7" opacity=".75"/><path d="M33 60l5 40M76 52l-5 48M50 85c8 3 14-4 18-8" stroke="#a0a3a6" stroke-width="3" opacity=".18" fill="none"/>
  </svg>
</footer>
<script src="fit.js"></script>
</body>
</html>
```
FILE: fit.js
```js
// Tracks each label so that its glyphs span exactly the column reserved for it.
document.querySelectorAll('[data-w]').forEach(function (el) {
  var target = Number(el.dataset.w);
  var natural = el.getBoundingClientRect().width;
  var gaps = el.textContent.length - 1;
  el.style.letterSpacing = ((target - natural) / gaps).toFixed(3) + 'px';
  el.style.width = target + 'px';
});
```
FILE: styles.css
```css
* { box-sizing: border-box; }
html, body { margin: 0; height: 1600px; overflow: hidden; }
body {
  width: 2560px;
  display: flex;
  flex-direction: column;
  align-items: center;
  background: linear-gradient(#1f2855 0 60px, #fbbc69 60px);
  font-family: Inter, "Liberation Sans", sans-serif;
}
.defs { position: absolute; }
svg { display: block; flex: none; overflow: visible; }
[data-w] { display: inline-block; white-space: nowrap; }

/* system menu bar */
.menubar {
  width: 100%; height: 45px; flex: none;
  display: flex; align-items: center;
  padding: 0 46px 1px 42px;
  color: #fff; font-size: 28px; font-weight: 500; line-height: 44px;
}
.apple { width: 26px; height: 32px; margin-top: -4px; }
.menus { display: flex; gap: 38px; margin-left: 40px; }
.app-name { font-weight: 700; }
.status { display: flex; align-items: center; margin-left: auto; }
.speaker { margin-left: 19px; }
.percent { margin-left: 45px; font-size: 24px; }
.battery { margin-left: 10px; }
.clock { margin-left: 33px; }
.search { margin-left: 40px; }
.siri { margin-left: 34px; }
.list { margin-left: 24px; }

/* browser window */
.window {
  width: 100%; height: 1419px; flex: none;
  display: flex; flex-direction: column;
  border-radius: 10px;
  background: #323234;
  box-shadow: 0 0 0 1.500px rgba(50, 45, 42, .9), 0 50px 72px -12px rgba(0, 0, 0, .68);
}
.tabbar {
  height: 67px; flex: none;
  display: flex;
  border-top: 2px solid #8d8d8e;
  border-radius: 10px 10px 0 0;
  background: #0c0c0d;
}
.lights { width: 210px; padding: 20px 0 0 26px; display: flex; gap: 16px; }
.lights i { width: 24px; height: 24px; border-radius: 50%; }
.red { background: #ff5f5b; }
.yellow { background: #ffbe3e; }
.green { background: #33c748; }
.tab {
  width: 450px; height: 65px;
  display: flex; align-items: center;
  padding: 0 24px 0 18px;
  border-left: 2px solid #4b4b4d;
  color: #b1b1b3; font-size: 22px; line-height: 65px;
}
.favicon { margin-right: 12px; }
.label {
  flex: 1; min-width: 0; overflow: hidden; margin-right: 12px;
  padding-top: 2px;
  -webkit-mask-image: linear-gradient(to left, transparent, #000 56px);
  mask-image: linear-gradient(to left, transparent, #000 56px);
}
.close { width: 20px; height: 20px; margin-top: 1px; stroke: #fff; stroke-width: 2.800; stroke-linecap: round; }
.tab.active {
  margin-top: -2px; height: 67px;
  border-left-color: #0c0c0d;
  background: linear-gradient(#5cb0ff 0 2px, #0a84ff 2px 5px, #323234 5px);
  color: #f9f9fa;
}
.active .label, .active .close { position: relative; top: 1px; }
.newtab { margin: 18px 0 0 20px; }

.toolbar {
  height: 80px; flex: none;
  display: flex; align-items: center;
  padding-left: 8px;
}
.back {
  width: 64px; height: 64px; border-radius: 50%;
  display: flex; align-items: center; justify-content: center;
  background: #69696a; box-shadow: 0 0 0 2px #262627;
}
.forward { margin-left: 18px; }
.reload { margin-left: 33px; }
.home { margin-left: 31px; }
.urlbar {
  width: 1546px; height: 60px; margin: 0 250px;
  display: flex; align-items: center;
  padding: 0 12px 0 14px;
  border: 2px solid #5a5a5c; border-radius: 8px;
  background: #474749;
}
.url {
  width: 1258px; margin-left: 17px; overflow: hidden;
  padding-top: 2px;
  color: #f9f9fa; font-size: 28px; line-height: 54px;
  -webkit-mask-image: linear-gradient(to left, transparent, #000 70px);
  mask-image: linear-gradient(to left, transparent, #000 70px);
}
.actions { display: flex; gap: 24px; margin-left: auto; }
.sidebar { margin-left: 32px; }
.account { margin-left: 32px; }
.divider { width: 2px; height: 68px; margin-left: 18px; background: #58585a; }
.burger { margin-left: 30px; }

.bookmarks {
  height: 46px; flex: none;
  display: flex; gap: 25px;
  padding-left: 24px;
  border-bottom: 2px solid #0c0c0d;
  color: #f9f9fa; font-size: 22px; line-height: 41px; font-weight: 500;
}
.bookmarks a { display: flex; align-items: center; gap: 8px; height: 41px; }
.bookmarks svg { width: 32px; height: 32px; }
.badge404 {
  width: 32px; height: 32px; border-radius: 50%;
  background: #000;
  font-size: 13px; font-weight: 400; line-height: 32px; text-align: center;
}

/* book page */
.page {
  flex: 1;
  display: flex; flex-direction: column; align-items: flex-start;
  border-radius: 0 0 10px 10px;
  overflow: hidden;
  background: linear-gradient(to right, #9b6022, #ffebcf 5%, #ffebcf 95%, #9b6022);
  color: #000;
  font-family: "Palatino Linotype", "Liberation Serif", serif;
}
.cover {
  width: 800px; height: 2px; align-self: center;
  background: linear-gradient(to right, #15364a, #24608c 25%, #22597c 75%, #3c7390);
}
h1, h2, h3, h4, ul { margin: 0; padding: 0; }
h1 {
  align-self: center; margin-top: 108px;
  font: italic 400 62px/80px "Z003", "Liberation Serif", cursive;
  -webkit-text-stroke: .8px #000;
}
h2 { align-self: center; margin-top: 45px; font-size: 51px; line-height: 60px; }
hr {
  width: 1600px; height: 4px; align-self: center; flex: none;
  margin: 41px 0 0; border: 0;
  background: linear-gradient(#575757 50%, #868686 50%);
}
h3 { margin-left: 555px; font-size: 39px; line-height: 42px; }
.contents { margin-top: 33px; line-height: 44px; }
.toc { margin: 40px 0 0 957px; list-style: none; font-size: 35px; line-height: 44px; }
.toc li { display: grid; grid-template-columns: 71px auto; justify-items: start; height: 44px; }
.toc b { font-weight: 400; }
.toc a { color: #9d6525; }
.chapter { margin-top: 38px; }
.chapter span { vertical-align: top; }
h4 { margin: 42px 0 0 401px; font-size: 33px; line-height: 40px; }

/* dock */
.dock {
  position: relative;
  width: 1686px; height: 138px; margin-top: -1px; flex: none;
  display: flex;
  padding-left: 7px;
  border: 2px solid #4d423a; border-bottom: 0;
  border-radius: 14px 14px 0 0;
  background: linear-gradient(#947559, #b68b57);
  box-shadow: inset 0 2px 0 rgba(255, 235, 215, .2), inset 2px 0 0 rgba(255, 235, 215, .15), inset -2px 0 0 rgba(255, 235, 215, .15), 0 0 90px rgba(60, 40, 50, .3);
}
.app { width: 112px; height: 137px; margin-top: -2px; }
.run { fill: #ffffd9; }
.sep { width: 50px; display: flex; justify-content: center; padding-top: 33px; }
.sep i { width: 2px; height: 68px; background: #e9c59a; }
.sep.tall { padding-top: 17px; }
.sep.tall i { height: 100px; margin-left: 4px; }
.petals { isolation: isolate; }
.petals rect { mix-blend-mode: multiply; }
.prompt { font: 700 20px "Liberation Mono", monospace; fill: #fff; }
.vb { font: 8px "Liberation Sans", sans-serif; fill: #dfe6ee; }
.vb.bold { font-weight: 700; }
.notes path { fill: url(#gNote); stroke: #d9c96e; stroke-width: .6; }
.notes { filter: drop-shadow(0 2px 2px rgba(60, 40, 10, .5)); }
.hand { font: italic 8.500px "Liberation Sans", sans-serif; fill: #5d5a2d; }
.hand.big { font-size: 12px; }
.hand.red { font-size: 10.500px; fill: #e5341c; }
.hand.navy { font-size: 9.500px; fill: #24386e; }
```
